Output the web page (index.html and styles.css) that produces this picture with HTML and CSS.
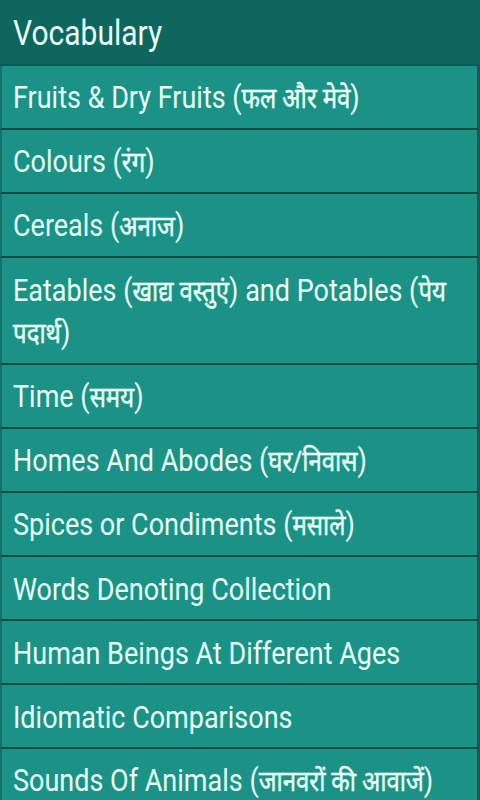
FILE: index.html
```html
<!DOCTYPE html>
<html lang="en">
<head>
  <meta charset="UTF-8" />
  <meta name="viewport" content="width=device-width, initial-scale=1.0"/>
  <title>Vocabulary</title>
  <link rel="stylesheet" href="styles.css">
</head>
<body>

  <div class="title-bar">
    <span class="label">Vocabulary</span>
  </div>

  <ul class="topic-list">
    <li><span class="label">Fruits &amp; Dry Fruits (<span class="hi">फल और मेवे</span>)</span></li>
    <li><span class="label">Colours (<span class="hi">रंग</span>)</span></li>
    <li><span class="label">Cereals (<span class="hi">अनाज</span>)</span></li>
    <li><span class="label">Eatables (<span class="hi">खाद्य वस्तुएं</span>) and Potables (<span class="hi">पेय</span> <span class="hi">पदार्थ</span>)</span></li>
    <li><span class="label">Time (<span class="hi">समय</span>)</span></li>
    <li><span class="label">Homes And Abodes (<span class="hi">घर/निवास</span>)</span></li>
    <li><span class="label">Spices or Condiments (<span class="hi">मसाले</span>)</span></li>
    <li><span class="label">Words Denoting Collection</span></li>
    <li><span class="label">Human Beings At Different Ages</span></li>
    <li><span class="label">Idiomatic Comparisons</span></li>
    <li><span class="label">Sounds Of Animals (<span class="hi">जानवरों की आवाजें</span>)</span></li>
  </ul>

</body>
</html>
```

FILE: styles.css
```css
body {
  margin: 0;
  font-family: Roboto, "Noto Sans", sans-serif;
  background-color: #1c9286;
  color: #e6fff6;
}

/* text is drawn a bit taller than wide, like the device font */
.label {
  display: inline-block;
  transform: scaleY(1.17);
}

/* hindi words: narrower and a little heavier */
.hi {
  font-size: 24px;
  -webkit-text-stroke: 0.4px #e6fff6;
}

.title-bar {
  height: 64px;
  padding: 0 13px;
  display: flex;
  align-items: center;
  background-color: #0f665e;
  border-bottom: 2px solid #0d5a53;
  font-size: 30px;
}

.topic-list {
  list-style: none;
  margin: 0;
  padding: 0;
}

.topic-list li {
  box-sizing: border-box;
  min-height: 64px;
  padding: 4px 11px 0;
  display: flex;
  align-items: center;
  background-color: #1c9286;
  border-left: 2px solid #167168;
  border-right: 3px solid #125a53;
  border-bottom: 2px solid #0f4a44;
  font-size: 27px;
  line-height: 35px;
}

.topic-list li:nth-child(4) {
  min-height: 107px;
}
```
